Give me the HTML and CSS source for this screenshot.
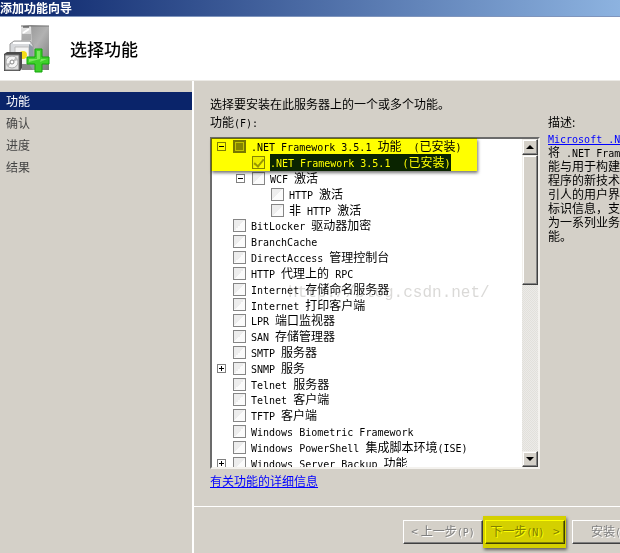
FILE: index.html
```html
<!DOCTYPE html>
<html lang="zh-CN">
<head>
<meta charset="utf-8">
<title>添加功能向导</title>
<link rel="stylesheet" href="styles.css">
</head>
<body>
<div class="titlebar">添加功能向导</div>
<header class="banner">
  <svg class="banner-icon" viewBox="0 0 48 50" aria-hidden="true">
    <defs>
      <linearGradient id="side" x1="0" y1="0" x2="1" y2="1"><stop offset="0" stop-color="#8c8c8c"/><stop offset=".5" stop-color="#b2b2b2"/><stop offset="1" stop-color="#777"/></linearGradient>
      <linearGradient id="front" x1="0" y1="0" x2="0" y2="1"><stop offset="0" stop-color="#e6e6e6"/><stop offset="1" stop-color="#999"/></linearGradient>
    </defs>
    <path d="M17 2 27 1 45 2V46H28L17 40Z" fill="url(#side)"/>
    <path d="M17 2H27L29 44H17Z" fill="url(#front)"/>
    <path d="M17 2H45" stroke="#777" stroke-width="1"/>
    <path d="M19 3H25" stroke="#333" stroke-width="1"/>
    <path d="M19 9 25 5" stroke="#fff" stroke-width="2"/>
    <path d="M18 11H27M18 13H27M18 15H27" stroke="#858585" stroke-width="1"/>
    <path d="M6 20 10 17H26L29 21V45H6Z" fill="#d8dadd" stroke="#999" stroke-width="1"/>
    <path d="M9 19H26" stroke="#fff" stroke-width="2"/>
    <path d="M11 23H25V45H11Z" fill="#f4f4f4" stroke="#bbb" stroke-width="1"/>
    <path d="M25 20 29 23V45H25Z" fill="#8f9ba6"/>
    <circle cx="19" cy="31" r="4" fill="#f4dc16"/>
    <path d="M18 40H25L29 46H18Z" fill="#888"/>
    <path d="M0 30 3 28H18V44L16 47H0Z" fill="#4a4a4a"/>
    <path d="M1 31H15V46H1Z" fill="#dedede" stroke="#777" stroke-width="1"/>
    <circle cx="8" cy="38" r="6" fill="#f5f5f5" stroke="#aaa"/>
    <path d="M8 38 12 33 14 36ZM8 38 4 43 2 40Z" fill="#bcbcbc"/>
    <circle cx="8" cy="38" r="2" fill="#fff" stroke="#888"/>
    <path d="M31 25H38V33H45V40H38V48H31V40H23V33H31Z" fill="#3fd02b" stroke="#12a50b" stroke-width="1"/>
    <path d="M33 27H36V35L25 38V35H33ZM37 35H43L36 38Z" fill="#7ae85f"/>
  </svg>
  <h1>选择功能</h1>
</header>
<div class="body">
  <nav class="steps">
    <a class="current" href="#features">功能</a>
    <a href="#confirm">确认</a>
    <a href="#progress">进度</a>
    <a href="#results">结果</a>
  </nav>
  <main class="page" id="features">
    <div class="content">
      <section class="picker">
        <p>选择要安装在此服务器上的一个或多个功能。</p>
        <p>功能<span class="en">(F):</span></p>
        <div class="listbox">
          <ul class="tree">
            <li><button class="toggle minus" aria-label="折叠"></button><input class="partial" type="checkbox" id="f1"><label for="f1"><span class="en">.NET Framework 3.5.1 </span>功能<span class="en">  (</span>已安装<span class="en">)</span></label></li>
            <li class="l1 selected"><input type="checkbox" id="f2" checked><label for="f2"><span class="en">.NET Framework 3.5.1  (</span>已安装<span class="en">)</span></label></li>
            <li class="l1"><button class="toggle minus" aria-label="折叠"></button><input type="checkbox" id="f3"><label for="f3"><span class="en">WCF </span>激活</label></li>
            <li class="l2"><input type="checkbox" id="f4"><label for="f4"><span class="en">HTTP </span>激活</label></li>
            <li class="l2"><input type="checkbox" id="f5"><label for="f5">非<span class="en"> HTTP </span>激活</label></li>
            <li><input type="checkbox" id="f6"><label for="f6"><span class="en">BitLocker </span>驱动器加密</label></li>
            <li><input type="checkbox" id="f7"><label for="f7"><span class="en">BranchCache</span></label></li>
            <li><input type="checkbox" id="f8"><label for="f8"><span class="en">DirectAccess </span>管理控制台</label></li>
            <li><input type="checkbox" id="f9"><label for="f9"><span class="en">HTTP </span>代理上的<span class="en"> RPC</span></label></li>
            <li><input type="checkbox" id="f10"><label for="f10"><span class="en">Internet </span>存储命名服务器</label></li>
            <li><input type="checkbox" id="f11"><label for="f11"><span class="en">Internet </span>打印客户端</label></li>
            <li><input type="checkbox" id="f12"><label for="f12"><span class="en">LPR </span>端口监视器</label></li>
            <li><input type="checkbox" id="f13"><label for="f13"><span class="en">SAN </span>存储管理器</label></li>
            <li><input type="checkbox" id="f14"><label for="f14"><span class="en">SMTP </span>服务器</label></li>
            <li><button class="toggle plus" aria-label="展开"></button><input type="checkbox" id="f15"><label for="f15"><span class="en">SNMP </span>服务</label></li>
            <li><input type="checkbox" id="f16"><label for="f16"><span class="en">Telnet </span>服务器</label></li>
            <li><input type="checkbox" id="f17"><label for="f17"><span class="en">Telnet </span>客户端</label></li>
            <li><input type="checkbox" id="f18"><label for="f18"><span class="en">TFTP </span>客户端</label></li>
            <li><input type="checkbox" id="f19"><label for="f19"><span class="en">Windows Biometric Framework</span></label></li>
            <li><input type="checkbox" id="f20"><label for="f20"><span class="en">Windows PowerShell </span>集成脚本环境<span class="en">(ISE)</span></label></li>
            <li><button class="toggle plus" aria-label="展开"></button><input type="checkbox" id="f21"><label for="f21"><span class="en">Windows Server Backup </span>功能</label></li>
          </ul>
          <div class="scrollbar">
            <button class="arrow" aria-label="向上滚动"><svg viewBox="0 0 8 4"><path d="M0 4H8L4 0Z"/></svg></button>
            <div class="thumb"></div>
            <div class="track"></div>
            <button class="arrow" aria-label="向下滚动"><svg viewBox="0 0 8 4"><path d="M0 0H8L4 4Z"/></svg></button>
          </div>
          <div class="marker tree-marker"></div>
          <div class="watermark">http://blog.csdn.net/</div>
        </div>
        <a class="more" href="#details">有关功能的详细信息</a>
      </section>
      <aside class="description">
        <h2>描述:</h2>
        <p><a class="en" href="#net">Microsoft .NET</a></p>
        <p>将<span class="en"> .NET Framework</span></p>
        <p>能与用于构建应用</p>
        <p>程序的新技术结合</p>
        <p>引人的用户界面</p>
        <p>标识信息，支持</p>
        <p>为一系列业务过程</p>
        <p>能。</p>
      </aside>
    </div>
    <footer class="actions">
      <button disabled>&lt; 上一步<span class="en">(P)</span></button>
      <div class="marked"><button disabled>下一步<span class="en">(N) </span> &gt;</button><div class="marker"></div></div>
      <button disabled>安装<span class="en">(I)</span></button>
    </footer>
  </main>
</div>
</body>
</html>
```
FILE: styles.css
```css
* { box-sizing: border-box; }

body {
  margin: 0;
  height: 100vh;
  display: flex;
  flex-direction: column;
  overflow: hidden;
  background: #d4d0c8;
  color: #000;
  font: 12px/14px "Noto Sans CJK SC", sans-serif;
}

p, h1, h2, ul { margin: 0; padding: 0; }
button { font: inherit; padding: 0; }

.en {
  font-family: "DejaVu Sans Mono", monospace;
  font-size: 10px;
  white-space: pre;
}

.titlebar {
  height: 17px;
  flex: none;
  background: linear-gradient(90deg, #0a246a, #8db3e0);
  border-bottom: 1px solid #7f95bd;
  color: #fff;
  font-weight: bold;
  line-height: 16px;
}

.banner {
  height: 64px;
  flex: none;
  display: flex;
  align-items: center;
  gap: 18px;
  padding-left: 4px;
  background: #fff;
  border-bottom: 1px solid #eceae6;
}
.banner-icon { width: 48px; height: 50px; }
.banner h1 { font-size: 17px; line-height: 20px; font-weight: 500; }

.body { flex: 1; min-height: 0; display: flex; }

.steps {
  width: 194px;
  flex: none;
  display: flex;
  flex-direction: column;
  gap: 4px;
  padding-top: 11px;
  border-right: 2px solid #fff;
}
.steps a {
  padding-left: 6px;
  line-height: 18px;
  color: #444;
  text-decoration: none;
}
.steps .current { background: #0a246a; color: #fff; }

.page { flex: 1; min-width: 0; display: flex; flex-direction: column; }

.content {
  flex: 1;
  min-height: 0;
  display: flex;
  gap: 8px;
  padding: 14px 0 17px 16px;
}

.picker { width: 330px; flex: none; display: flex; flex-direction: column; }
.picker > p { line-height: 18px; }

.listbox {
  position: relative;
  flex: 1;
  min-height: 0;
  display: flex;
  margin: 7px 0 4px;
  background: #fff;
  border: 2px solid;
  border-color: #6b6b6b #f4f2ee #f4f2ee #6b6b6b;
}
.picker > p + p { margin-bottom: -3px; }

.tree {
  flex: 1;
  height: calc(100% + 4px);
  display: grid;
  grid-auto-rows: minmax(0, 1fr);
  list-style: none;
  clip-path: inset(0 0 4px);
}
.tree li {
  display: flex;
  align-items: center;
  padding-left: 21px;
  white-space: pre;
}
.tree .l1 { padding-left: 40px; }
.tree .l2 { padding-left: 59px; }
.tree label { margin-left: 5px; line-height: 15px; }
.selected label { background: #0a246a; color: #fff; }
.selected input { border-color: #a8a8a8; }

.tree input {
  appearance: none;
  flex: none;
  width: 13px;
  height: 13px;
  margin: 0;
  border: 1px solid #858585;
  background: linear-gradient(135deg, #ededed 50%, #fbfbfb 50%);
}
.tree .partial { background: #858585; border: 2px solid #777; box-shadow: inset 0 0 0 1px #c4c4c4; }
.tree input:checked::after {
  content: "";
  display: block;
  width: 4px;
  height: 8px;
  margin: 0 auto;
  border: solid #999;
  border-width: 0 2px 2px 0;
  transform: rotate(40deg);
}

.toggle {
  flex: none;
  width: 9px;
  height: 9px;
  margin: 0 7px 0 -16px;
  border: 1px solid #808080;
  background: linear-gradient(#000, #000) center / 5px 1px no-repeat #fff;
}
.plus {
  background:
    linear-gradient(#000, #000) center / 5px 1px no-repeat,
    linear-gradient(#000, #000) center / 1px 5px no-repeat #fff;
}

.scrollbar { width: 16px; flex: none; display: flex; flex-direction: column; }
.arrow, .thumb {
  background: #d4d0c8;
  border: 1px solid;
  border-color: #f1efeb #404040 #404040 #f1efeb;
  box-shadow: inset -1px -1px #858585, inset 1px 1px #fff;
}
.arrow { flex: none; height: 16px; display: grid; place-items: center; }
.arrow svg { width: 8px; height: 4px; }
.thumb { flex: 43; }
.track { flex: 56; background: repeating-conic-gradient(#e2e0db 0 25%, #ecebe8 0 50%) 0 0 / 2px 2px; }

.marker {
  position: absolute;
  inset: 0;
  background: #ff0;
  mix-blend-mode: multiply;
  box-shadow: 1px 2px 3px #777;
  pointer-events: none;
}
.tree-marker { inset: -1px auto auto -1px; width: 266px; height: 33px; }

.watermark {
  position: absolute;
  left: 76px;
  top: 144px;
  color: rgba(150, 145, 140, .35);
  font: 16px/20px "Liberation Mono", monospace;
  pointer-events: none;
}

.more { align-self: flex-start; line-height: 16px; }
a { color: #00f; }

.description { flex: 1; min-width: 0; overflow: hidden; padding-top: 18px; white-space: nowrap; }
.description h2 { font-size: 12px; line-height: 18px; font-weight: normal; }
.description p { height: 14px; }

.actions {
  height: 47px;
  flex: none;
  display: flex;
  align-items: flex-start;
  padding: 9px 0 0 209px;
  border-top: 1px solid #fff;
  overflow: hidden;
}
.actions button {
  flex: none;
  width: 80px;
  height: 24px;
  margin-top: 4px;
  background: #d4d0c8;
  border: 1px solid;
  border-color: #fff #404040 #404040 #fff;
  box-shadow: inset -1px -1px #808080;
  color: #808080;
  text-shadow: 1px 1px #fff;
  white-space: pre;
}
.marked { position: relative; flex: none; height: 32px; padding: 0 1px 0 2px; margin-right: 6px; }
```
